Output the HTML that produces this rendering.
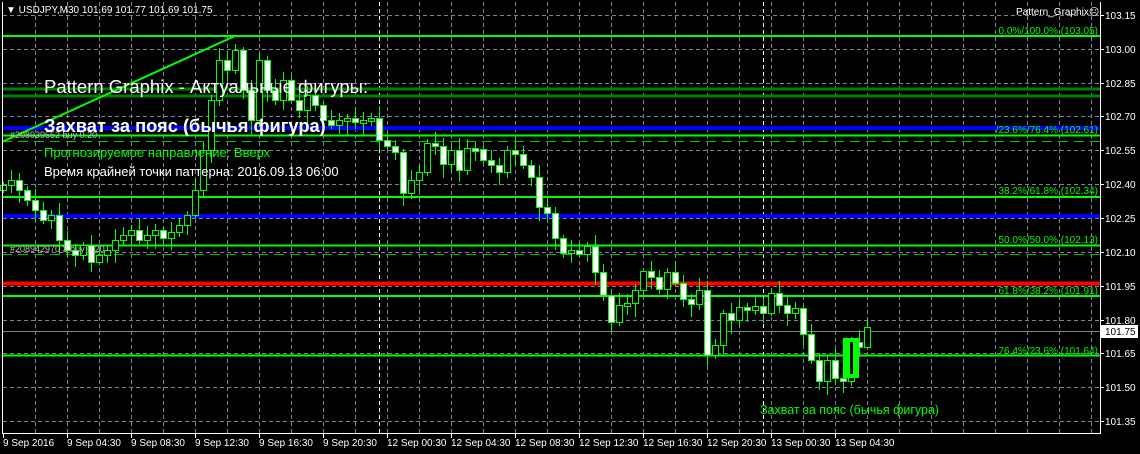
<!DOCTYPE html>
<html><head><meta charset="utf-8"><style>
html,body{margin:0;padding:0;background:#000;width:1140px;height:454px;overflow:hidden}
svg{display:block}
text{font-family:"Liberation Sans",sans-serif}
</style></head><body>
<svg id="s" width="1140" height="454" xmlns="http://www.w3.org/2000/svg">
<rect width="1140" height="454" fill="#000"/>
<g id="grid"></g>
<line x1="2" y1="36" x2="1100" y2="36" stroke="#00ff00" stroke-width="2"/>
<line x1="2" y1="89" x2="1100" y2="89" stroke="#008000" stroke-width="3"/>
<line x1="2" y1="96" x2="1100" y2="96" stroke="#008000" stroke-width="3"/>
<line x1="2" y1="128" x2="1100" y2="128" stroke="#0000ff" stroke-width="4"/>
<line x1="2" y1="135.5" x2="1100" y2="135.5" stroke="#00ff00" stroke-width="2"/>
<line x1="2" y1="141.5" x2="1100" y2="141.5" stroke="#00c000" stroke-width="1" stroke-dasharray="10,6"/>
<line x1="2" y1="197" x2="1100" y2="197" stroke="#00ff00" stroke-width="2"/>
<line x1="2" y1="216" x2="1100" y2="216" stroke="#0000ff" stroke-width="4"/>
<line x1="2" y1="245.5" x2="1100" y2="245.5" stroke="#00ff00" stroke-width="2"/>
<line x1="2" y1="254.5" x2="1100" y2="254.5" stroke="#00c000" stroke-width="1" stroke-dasharray="10,6"/>
<line x1="2" y1="283.5" x2="1100" y2="283.5" stroke="#ff0000" stroke-width="4"/>
<line x1="2" y1="296" x2="1100" y2="296" stroke="#00ff00" stroke-width="2"/>
<line x1="2" y1="331.5" x2="1100" y2="331.5" stroke="#808080" stroke-width="1"/>
<line x1="2" y1="355.5" x2="1100" y2="355.5" stroke="#00ff00" stroke-width="2"/>
<g id="candles"></g>
<line x1="2" y1="142" x2="235" y2="36" stroke="#00ff00" stroke-width="2"/>
<rect x="843" y="338" width="16" height="40" fill="#00ff00"/>
<rect x="850" y="342" width="3" height="32" fill="#000"/>
<line x1="2.5" y1="2" x2="2.5" y2="433" stroke="#fff"/>
<line x1="2" y1="433.5" x2="1100" y2="433.5" stroke="#fff"/>
<line x1="1100.5" y1="2" x2="1100.5" y2="434" stroke="#fff"/>
<g id="axis" font-size="10" fill="#fff"></g>
<rect x="1101" y="325" width="37" height="13" fill="#fff"/>
<text x="1105" y="335" font-size="10" fill="#000">101.75</text>
<text x="6" y="13" font-size="10" fill="#fff">▼ USDJPY,M30  101.69 101.77 101.69 101.75</text>
<text x="1016" y="15" font-size="10" fill="#fff">Pattern_Graphix☹</text>
<g font-size="10" fill="#00ff00" text-anchor="end">
<text x="1098" y="34">0.0%/100.0% (103.05)</text>
<text x="1098" y="133">/23.6%/76.4% (102.61)</text>
<text x="1098" y="194">38.2%/61.8% (102.34)</text>
<text x="1098" y="243">50.0%/50.0% (102.13)</text>
<text x="1098" y="294">61.8%/38.2% (101.91)</text>
<text x="1098" y="354">76.4%/23.6% (101.64)</text>
</g>
<text x="10" y="138" font-size="9" fill="#c0c0c0">#208939552 buy 0.20</text>
<text x="10" y="252" font-size="9" fill="#c0c0c0">#208942970 3 buy 0.20</text>
<text x="44" y="93" font-size="18.5" fill="#fff">Pattern Graphix - Актуальные фигуры:</text>
<text x="44" y="132" font-size="18.3" font-weight="bold" fill="#fff">Захват за пояс (бычья фигура)</text>
<text x="44" y="157" font-size="13" fill="#00ff00">Прогнозируемое направление: Вверх</text>
<text x="44" y="176" font-size="13" fill="#fff">Время крайней точки паттерна: 2016.09.13 06:00</text>
<text x="760" y="414" font-size="12.5" fill="#00ff00">Захват за пояс (бычья фигура)</text>
</svg>
<script>
var NS="http://www.w3.org/2000/svg";
function el(p,t,a){var e=document.createElementNS(NS,t);for(var k in a)e.setAttribute(k,a[k]);p.appendChild(e);return e;}
var g=document.getElementById('grid');
var hy=[15,49,83,116,150,184,218,252,286,320,353,387,421];
hy.forEach(function(y){el(g,'line',{x1:3,y1:y+.5,x2:1100,y2:y+.5,stroke:'#7a8494','stroke-dasharray':'4,3'});});
for(var x=35;x<1100;x+=32){el(g,'line',{x1:x+.5,y1:2,x2:x+.5,y2:433,stroke:'#7a8494','stroke-dasharray':'4,3'});}
[379,763].forEach(function(x){el(g,'line',{x1:x+.5,y1:2,x2:x+.5,y2:433,stroke:'#fff','stroke-dasharray':'4,3'});});
var ax=document.getElementById('axis');
var pl=['103.15','103.00','102.85','102.70','102.55','102.40','102.25','102.10','101.95','101.80','101.65','101.50','101.35'];
hy.forEach(function(y,i){el(ax,'line',{x1:1100,y1:y+.5,x2:1104,y2:y+.5,stroke:'#fff'});var t=el(ax,'text',{x:1105,y:y+4});t.textContent=pl[i];});
var tl=['9 Sep 2016','9 Sep 04:30','9 Sep 08:30','9 Sep 12:30','9 Sep 16:30','9 Sep 20:30','12 Sep 00:30','12 Sep 04:30','12 Sep 08:30','12 Sep 12:30','12 Sep 16:30','12 Sep 20:30','13 Sep 00:30','13 Sep 04:30'];
tl.forEach(function(s,i){var x=3+64*i;el(ax,'line',{x1:x+.5,y1:433,x2:x+.5,y2:438,stroke:'#fff'});var t=el(ax,'text',{x:x,y:446});t.textContent=s;});
var cs=[185,180,190,200,210,220,215,240,250,255,245,262,255,250,240,235,230,240,235,230,238,232,225,215,190,150,100,60,70,50,90,120,60,90,100,80,100,110,95,105,120,125,120,118,122,120,118,140,146,152,193,180,172,143,146,164,150,170,148,149,160,165,172,150,154,165,177,207,213,238,253,250,254,246,272,295,322,305,303,290,271,277,289,272,283,299,304,290,355,345,313,320,307,310,306,313,293,305,313,308,334,360,381,360,378,381,342,347,327];
var cg=document.getElementById('candles');
var op=190;
for(var i=0;i<cs.length;i++){
 var cx=3+8*i, cl=cs[i], tp=Math.min(op,cl), bt=Math.max(op,cl);
 if(bt-tp<3){bt=tp+3;}
 var w1=3+((i*7)%10), w2=3+((i*5)%12);
 el(cg,'line',{x1:cx+.5,y1:tp-w1,x2:cx+.5,y2:bt+w2,stroke:'#00ff00'});
 el(cg,'rect',{x:cx-2.5,y:tp+.5,width:6,height:bt-tp,fill:(cl<op?'#000':'#fff'),stroke:'#00ff00'});
 op=cl;
}
</script>
</body></html>
